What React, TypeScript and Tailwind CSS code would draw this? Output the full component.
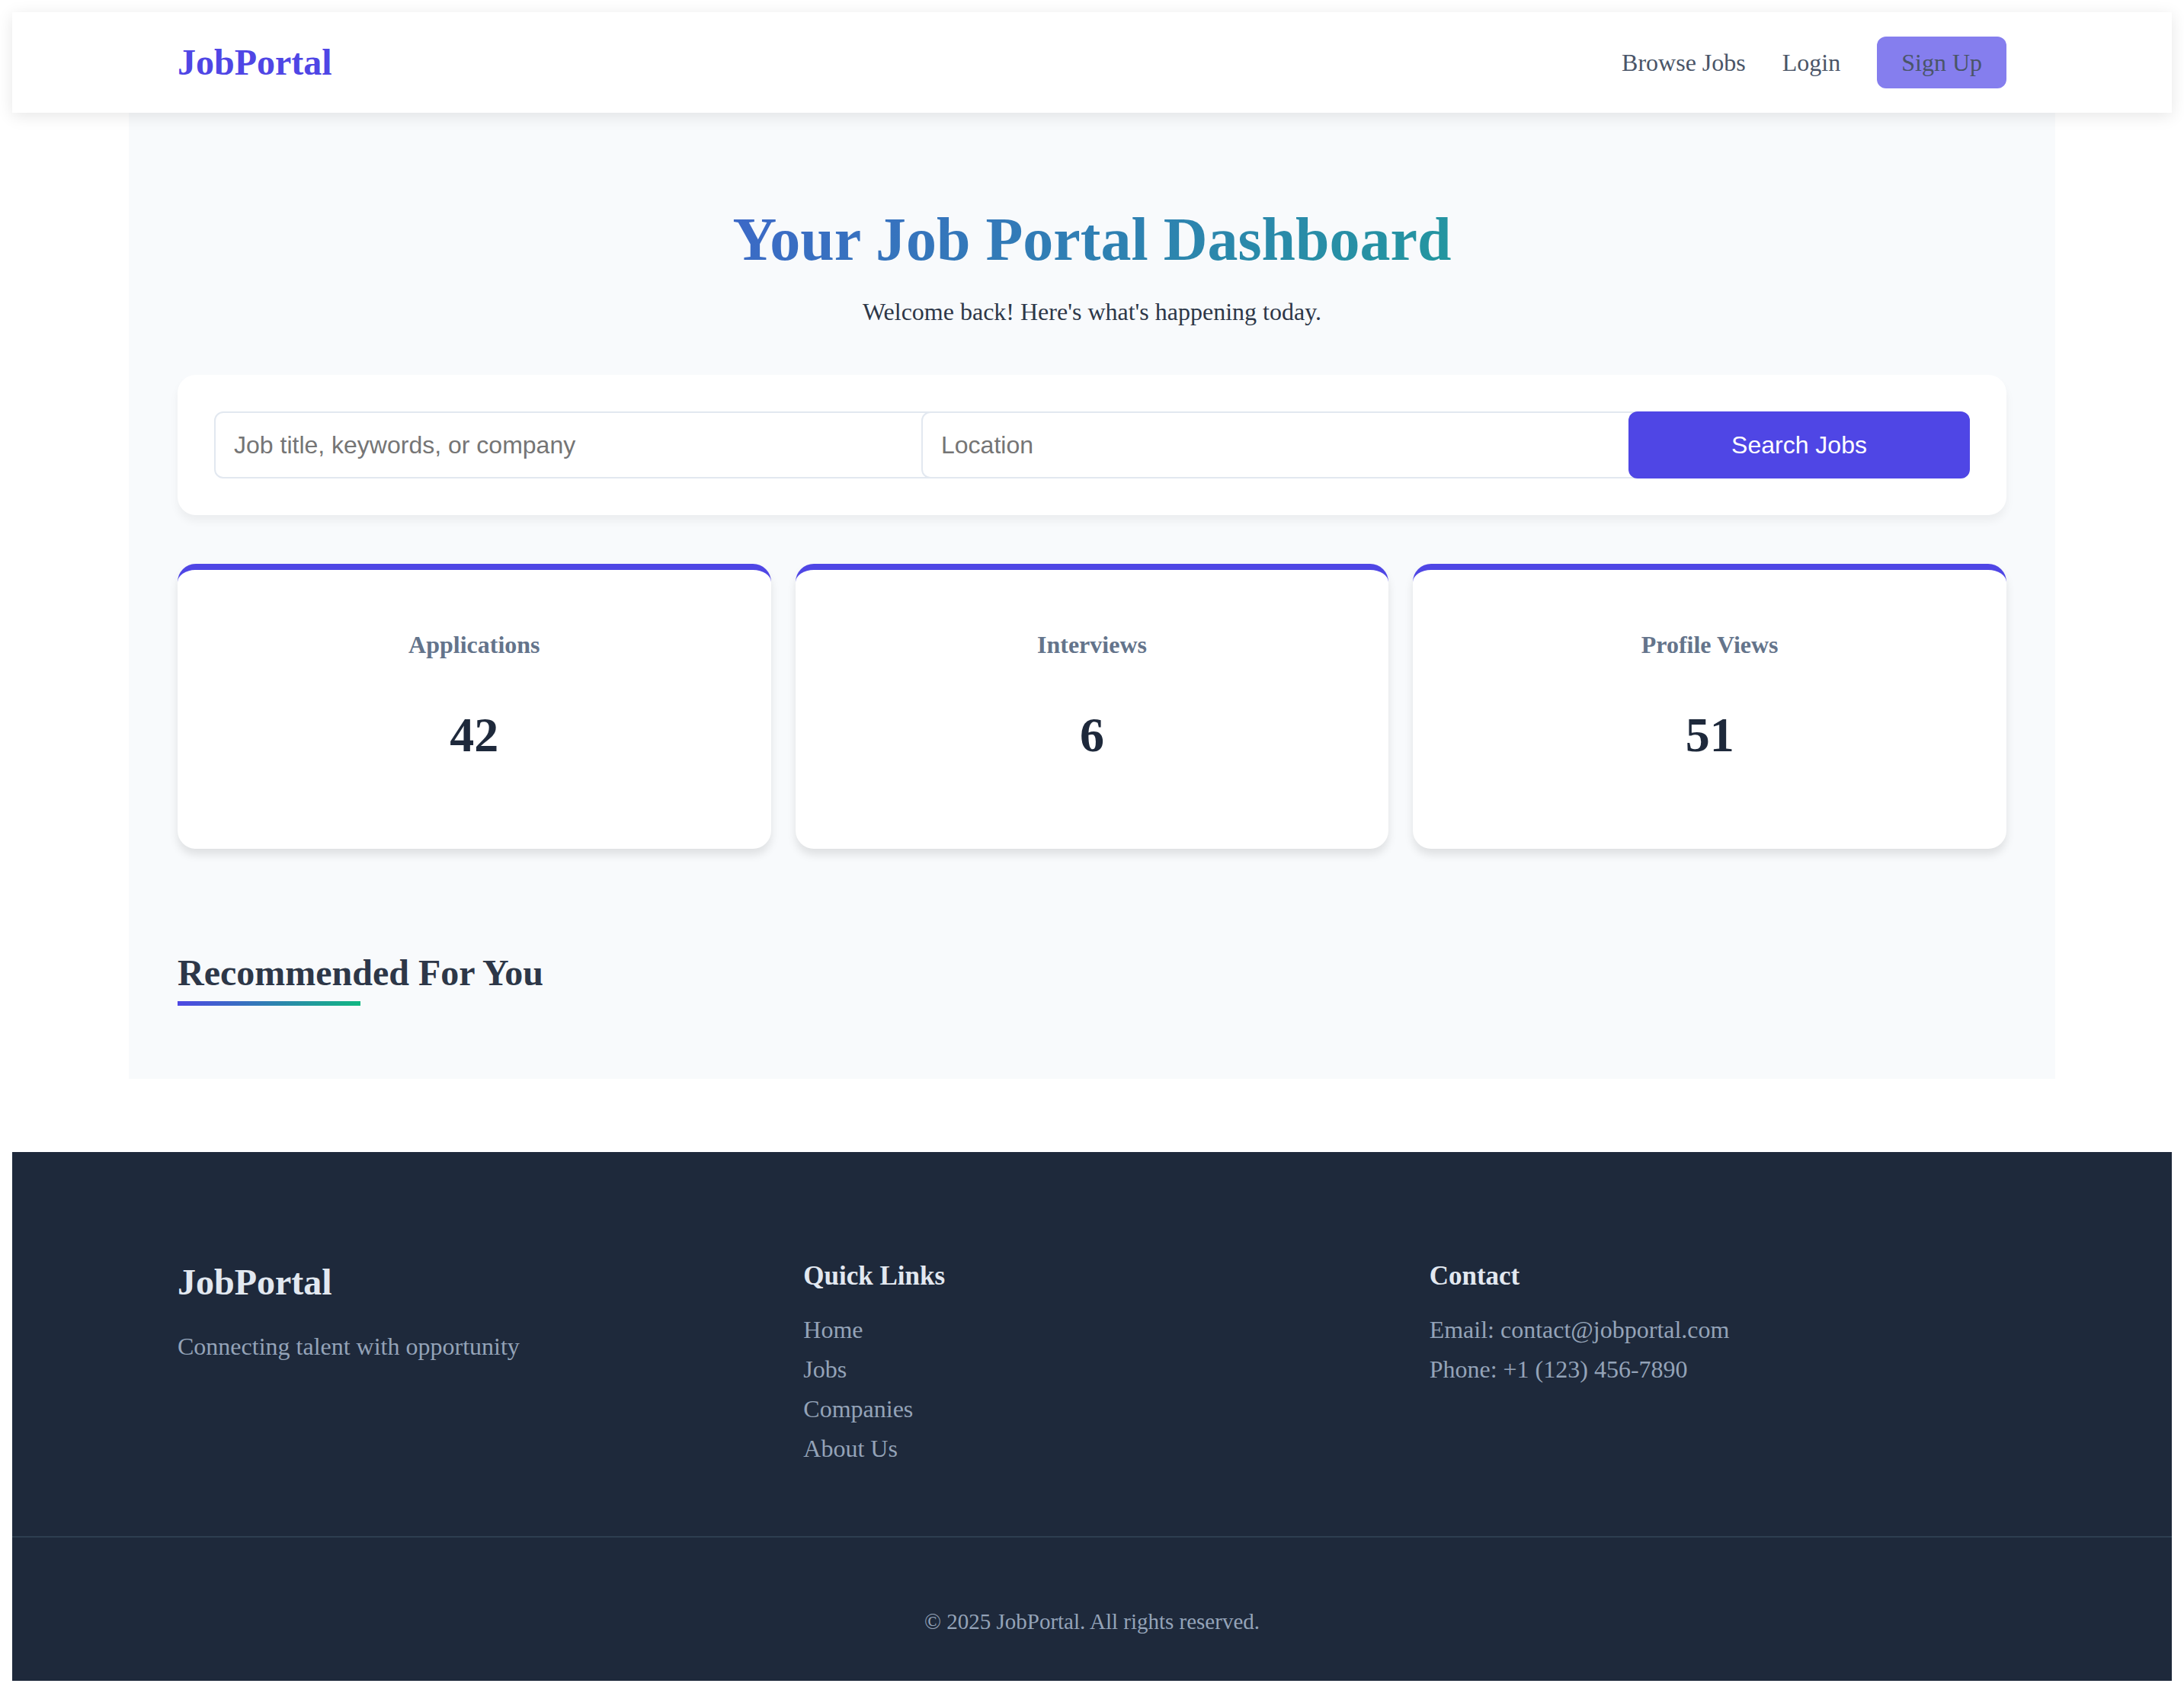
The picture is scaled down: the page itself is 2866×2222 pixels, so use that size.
const stats = [
  { label: "Applications", value: 42 },
  { label: "Interviews", value: 6 },
  { label: "Profile Views", value: 51 },
];

const quickLinks = ["Home", "Jobs", "Companies", "About Us"];

function Header() {
  return (
    <header className="relative z-10 bg-white px-16 py-8 shadow-[0_4px_20px_rgba(0,0,0,0.1)]">
      <div className="mx-auto flex max-w-[2400px] items-center justify-between">
        <a href="#" className="text-[48px] leading-[58px] font-bold text-[#4f46e5]">
          JobPortal
        </a>
        <nav className="flex items-center gap-12 text-[32px] leading-9 text-[#4a5568]">
          <a href="#browse">Browse Jobs</a>
          <a href="#login">Login</a>
          <a href="#signup" className="rounded-xl bg-[#857eee] px-8 py-4">
            Sign Up
          </a>
        </nav>
      </div>
    </header>
  );
}

function SearchBar() {
  const field =
    "block box-content h-9 w-full rounded-xl border-2 border-[#e2e8f0] bg-white px-6 py-6 placeholder:text-[#757575]";
  return (
    <form
      onSubmit={(e) => e.preventDefault()}
      className="mt-16 grid grid-cols-[minmax(0,2fr)_minmax(0,2fr)_minmax(0,1fr)] gap-8 rounded-3xl bg-white p-12 font-['Liberation_Sans',Arial,sans-serif] text-[32px] leading-9 shadow-[0_8px_12px_rgba(0,0,0,0.05)]"
    >
      <div>
        <input
          type="text"
          aria-label="Job title, keywords, or company"
          placeholder="Job title, keywords, or company"
          className={field}
        />
      </div>
      <div>
        <input type="text" aria-label="Location" placeholder="Location" className={field} />
      </div>
      <button type="submit" className="relative rounded-xl bg-[#4f46e5] text-white">
        Search Jobs
      </button>
    </form>
  );
}

function Dashboard() {
  return (
    <main className="mx-auto max-w-[2528px] bg-[#f8fafc] px-16 pt-30 pb-24">
      <h1 className="bg-[linear-gradient(135deg,#4f46e5,#10b981)] bg-clip-text text-center text-[80px] leading-[92px] font-bold text-transparent">
        Your Job Portal Dashboard
      </h1>
      <p className="mt-[30px] text-center text-[32px] leading-[38px] text-[#2d3748]">
        Welcome back! Here's what's happening today.
      </p>

      <SearchBar />

      <section className="mt-16 grid grid-cols-3 gap-8">
        {stats.map((s) => (
          <article
            key={s.label}
            className="rounded-3xl border-t-8 border-[#4f46e5] bg-white px-12 pt-20 pb-28 text-center font-bold shadow-[0_8px_12px_rgba(0,0,0,0.1)]"
          >
            <h3 className="text-[32px] leading-9 text-[#64748b]">{s.label}</h3>
            <p className="mt-16 text-[64px] leading-[74px] text-[#1e293b]">{s.value}</p>
          </article>
        ))}
      </section>

      <section className="mt-[134px] flex">
        <h2 className="text-[48px] leading-[58px] font-bold text-[#2d3748]">
          Recommended For You
          <span className="mt-2 block h-1.5 w-1/2 bg-[linear-gradient(135deg,#4f46e5,#10b981)]" />
        </h2>
      </section>
    </main>
  );
}

function Footer() {
  return (
    <footer className="mt-24 bg-[#1e293b] text-[32px] leading-[38px] text-[#94a3b8]">
      <div className="px-16 pt-[142px] pb-24">
        <div className="mx-auto grid max-w-[2400px] grid-cols-3 gap-16">
          <section>
            <h3 className="text-[48px] leading-[58px] font-bold text-[#e2e8f0]">JobPortal</h3>
            <p className="mt-9">Connecting talent with opportunity</p>
          </section>
          <section>
            <h4 className="text-[35px] leading-[42px] font-bold text-[#e2e8f0]">Quick Links</h4>
            <ul className="mt-[30px] flex flex-col gap-3.5">
              {quickLinks.map((l) => (
                <li key={l}>
                  <a href="#" className="block">{l}</a>
                </li>
              ))}
            </ul>
          </section>
          <section>
            <h4 className="text-[35px] leading-[42px] font-bold text-[#e2e8f0]">Contact</h4>
            <ul className="mt-[30px] flex flex-col gap-3.5">
              <li>Email: contact@jobportal.com</li>
              <li>Phone: +1 (123) 456-7890</li>
            </ul>
          </section>
        </div>
      </div>
      <div className="border-t-2 border-[#2d3e50] pt-[92px] pb-15 text-center text-[29px] leading-9">
        <p>© 2025 JobPortal. All rights reserved.</p>
      </div>
    </footer>
  );
}

export default function App() {
  return (
    <div className="bg-white p-4 font-['Liberation_Serif','Times_New_Roman',serif]">
      <Header />
      <Dashboard />
      <Footer />
    </div>
  );
}
